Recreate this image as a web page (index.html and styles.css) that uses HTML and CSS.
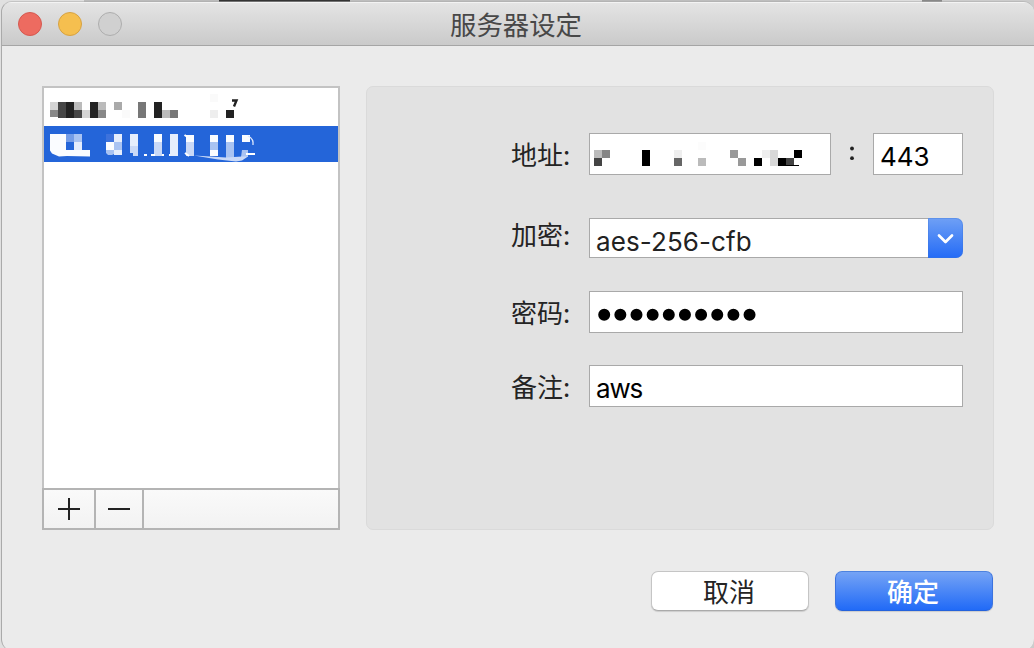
FILE: index.html
```html
<!DOCTYPE html>
<html lang="zh-CN">
<head>
<meta charset="utf-8">
<title>服务器设定</title>
<link rel="stylesheet" href="styles.css">
</head>
<body>
<div class="window">
  <header class="titlebar">
    <div class="lights"><i class="light red"></i><i class="light yellow"></i><i class="light off"></i></div>
    <h1 class="title">服务器设定</h1>
  </header>
  <main class="content">
    <section class="sidebar">
      <div class="list">
        <div class="item">
          <svg class="mosaic" width="294" height="38" viewBox="44 88 294 38" shape-rendering="crispEdges">
            <path fill="#d4d4d4" d="M50 102h8v8h-8zM82 110h8v8h-8z"/><path fill="#888" d="M50 110h8v7h-8zM98 110h8v8h-8z"/>
            <path fill="#464646" d="M58 102h8v16h-8zM74 110h8v8h-8z"/><path fill="#222" d="M66 102h8v16h-8zM90 102h8v16h-8zM154 102h8v16h-8zM226 110h8v8h-8z"/>
            <path fill="#bbb" d="M74 102h8v8h-8zM98 102h8v8h-8zM162 110h8v8h-8z"/><path fill="#aaa" d="M114 102h8v8h-8z"/>
            <path fill="#777" d="M138 102h8v16h-8zM170 110h8v8h-8z"/><path fill="#eee" d="M210 110h8v8h-8z"/><path fill="#fafafa" d="M122 110h8v8h-8zM210 94h8v8h-8z"/>
            <path d="M232 100.500h4.500l-2.500 6" fill="none" stroke="#222" stroke-width="2.400" shape-rendering="auto"/>
          </svg>
        </div>
        <div class="item selected">
          <svg class="mosaic" width="294" height="36" viewBox="44 126 294 36">
            <path fill="#fafcff" d="M50 134h16v16h24v6.500L67 156l-8 .5-7-3-2-3zM106 142h8v8h-8zM154 134h8v8h-8zM186 135h8v7h-8zM210 135h8v7h-8zM210 150h8v6h-8zM226 135h8v7h-8zM242 135h8v7h-8z"/>
            <path fill="#759de7" d="M66 134h8v8h-8z"/><path fill="#3d72dc" d="M106 134h8v8h-8z"/>
            <path fill="#a9c3f2" d="M74 134h8v8h-8zM114 142h8v8h-8zM106 150h8v4l-2 1h-4l-2-2zM210 142h8v8h-8zM226 142h8v17h-8zM242 150h6v7h-7z"/>
            <path fill="#e5edfc" d="M74 142h8v8h-8zM114 134h8v8h-8zM114 150h8v5h-8zM130 134h8v12h-8zM170 134h8v22h-8z"/>
            <path fill="#cad9f7" d="M130 146h8v10h-5v-3h-3zM154 142h8v14h-8zM186 142h8v14h-8z"/>
            <path d="M144 155h3M151 155h4M162 155h2M169 155h1M184.500 135l3 2M185 153l4 3" stroke="white" stroke-width="2"/>
            <path fill="#cad9f7" d="M194 155.500l16 1 16 1 16-1h6l-6 4-6 1-18-2z"/>
            <path fill="#fff" d="M246 153h9v2h-9z"/>
            <path d="M248 136q6 3 5 9" fill="none" stroke="#dce7fc" stroke-width="1.300"/>
          </svg>
        </div>
      </div>
      <div class="tools">
        <div class="tool add"><svg width="22" height="22"><path d="M0 11h22M11 0v22" stroke="#222" stroke-width="2"/></svg></div>
        <div class="tool"><svg width="22" height="22"><path d="M0 11h22" stroke="#222" stroke-width="2"/></svg></div>
      </div>
    </section>
    <section class="right">
      <div class="panel">
        <div class="row address"><label class="label">地址:</label>
          <div class="field host">
            <svg class="mosaic" width="240" height="40" viewBox="590 134 240 40" shape-rendering="crispEdges">
              <path fill="#bbb" d="M594 150h8v8h-8zM698 158h8v8h-8z"/><path fill="#858585" d="M602 150h8v8h-8z"/><path fill="#444" d="M594 158h8v8h-8zM786 158h8v7h-8z"/>
              <path fill="#000" d="M642 150h8v16h-8zM754 158h8v8h-8zM778 158h8v8h-8zM794 150h8v8h-8zM786 165h13v1h-13z"/>
              <path fill="#eee" d="M674 150h8v8h-8zM762 150h8v8h-8z"/><path fill="#666" d="M674 158h8v8h-8z"/>
              <path fill="#999" d="M730 150h8v8h-8zM738 158h8v8h-8z"/><path fill="#d8d8d8" d="M770 150h8v16h-8z"/><path fill="#fcfcfc" d="M698 142h8v8h-8z"/>
            </svg>
          </div>
          <svg class="colon" width="42" height="42"><circle cx="21" cy="15.500" r="1.900" fill="#222"/><circle cx="21" cy="25.200" r="1.900" fill="#222"/></svg>
          <div class="field port">443</div>
        </div>
        <div class="row cipher"><label class="label">加密:</label>
          <div class="field select">aes-256-cfb</div>
          <div class="arrow"><svg width="35" height="40"><path d="M11 17.500l6.500 6.500 6.500-6.500" fill="none" stroke="white" stroke-width="2.700" stroke-linecap="round" stroke-linejoin="round"/></svg></div>
        </div>
        <div class="row secret"><label class="label">密码:</label>
          <div class="field"><svg width="170" height="40"><path d="M8.200 22.700h160" stroke="#000" stroke-width="12" stroke-linecap="round" stroke-dasharray="0 16.150" pathLength="160"/></svg></div>
        </div>
        <div class="row"><label class="label">备注:</label><div class="field note">aws</div></div>
      </div>
      <div class="buttons"><button class="btn">取消</button><button class="btn primary">确定</button></div>
    </section>
  </main>
</div>
</body>
</html>
```
FILE: styles.css
```css
* { box-sizing: border-box; }
body {
  margin: 0;
  height: 648px;
  overflow: hidden;
  padding: 1px 0 0 1px;
  background: linear-gradient(90deg, #e0e0e0 0 84px, #bbb 84px 219px, #333 219px 350px, #bebebe 350px 790px, #ddd 790px 922px, #888 922px 942px, #ccc 942px);
  font-family: Inter, "Noto Sans CJK SC", sans-serif;
  color: #242424;
}
svg { display: block; }
.window {
  height: 650px;
  border-left: 1px solid #aaa;
  border-top: 1px solid #aaa8;
  border-radius: 11px 11px 12px 12px;
  background: #ebebeb;
  background-clip: padding-box;
  overflow: hidden;
}
.titlebar {
  height: 44px;
  display: grid;
  grid-template-columns: 122px 1fr 126px;
  align-items: center;
  border-top: 1px solid #f3f3f3;
  border-bottom: 1px solid #a5a5a5;
  background: linear-gradient(#e4e4e4, #cacaca);
}
.lights { display: flex; gap: 16px; padding-left: 16px; }
.light { flex: none; width: 24px; height: 24px; border-radius: 50%; border: 1px solid; }
.red { background: #ed6b60; border-color: #d45950; }
.yellow { background: #f5bf4f; border-color: #d6a243; }
.off { background: #d0d0d0; border-color: #adadad; }
.title {
  margin: 2px 0 0;
  text-align: center;
  font-size: 26.400px;
  line-height: 38px;
  font-weight: 400;
  color: #484848;
}
.content { display: flex; gap: 26px; padding: 40px 0 0 40px; }
.sidebar { width: 298px; height: 444px; display: flex; flex-direction: column; }
.list {
  flex: 1;
  border: 2px solid #c3c3c3;
  border-bottom: 0;
  background: #fff;
}
.item { height: 38px; overflow: hidden; }
.selected { height: 36px; background: #2465d9; }
.tools {
  height: 42px;
  display: flex;
  border: 2px solid #b4b4b4;
  background: linear-gradient(#fafafa, #f2f2f2);
}
.tool {
  width: 48px;
  display: grid;
  place-items: center;
  border-right: 2px solid #b4b4b4;
}
.add { width: 52px; }
.right { width: 628px; }
.panel {
  height: 444px;
  padding: 46px 30px 0 144px;
  border: 1px solid #dadada;
  border-radius: 7px;
  background: #e2e2e2;
}
.row { display: flex; height: 42px; }
.address { margin-bottom: 43px; }
.cipher { height: 40px; margin-bottom: 33px; }
.secret { margin-bottom: 32px; }
.label {
  width: 78px;
  flex: none;
  font: 26px/42px "Noto Sans CJK SC", sans-serif;
  white-space: nowrap;
}
.cipher .label { line-height: 32px; }
.field {
  flex: 1;
  border: 1px solid #a9a9a9;
  background: #fff;
  font-size: 26px;
  line-height: 46px;
  padding-left: 6px;
  color: #000;
  white-space: nowrap;
}
.host { flex: none; width: 242px; padding: 0; }
.note { letter-spacing: -1.200px; }
.select { border-right: 0; color: #222; line-height: 45px; letter-spacing: .1px; }
.arrow {
  width: 35px;
  height: 40px;
  border-radius: 0 7px 7px 0;
  background: linear-gradient(#6fa0f5, #246bf6);
  box-shadow: inset 0 0 0 1px #3d74d755;
}
.buttons { display: flex; justify-content: flex-end; gap: 26px; padding: 41px 1px 0 0; }
.btn {
  width: 158px;
  height: 40px;
  padding: 0 2px 0 0;
  border: 1px solid #c5c5c5;
  border-bottom-color: #aaa;
  border-radius: 7px;
  background: #fff;
  color: #242424;
  font: 26px/38px "Noto Sans CJK SC", sans-serif;
  box-shadow: 0 1px 1px #0002;
}
.primary {
  border-color: #4d82df #3c73de #2462dc;
  background: linear-gradient(#75a3f5, #216af7);
  color: #fff;
  font-weight: 500;
}
```
